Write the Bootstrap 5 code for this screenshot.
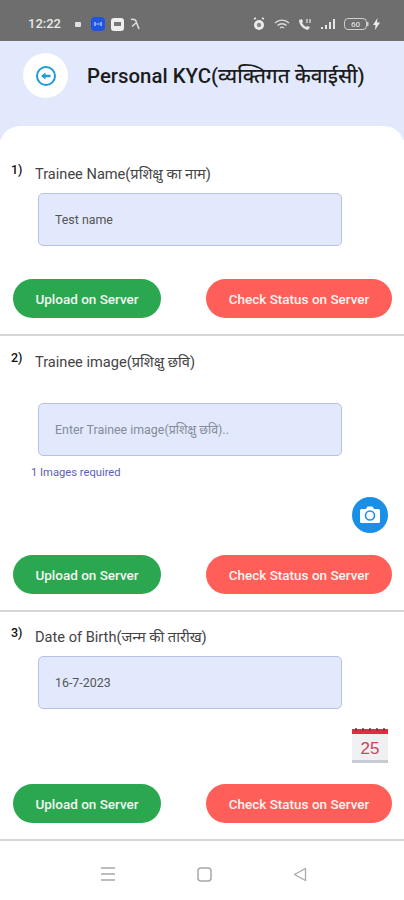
<!DOCTYPE html>
<html lang="hi">
<head>
  <meta charset="UTF-8">
  <meta name="viewport" content="width=device-width, initial-scale=1.0">
  <title>Personal KYC</title>
  <link href="https://cdn.jsdelivr.net/npm/bootstrap@5.3.0/dist/css/bootstrap.min.css" rel="stylesheet">
  <style>
    body { width: 404px; height: 900px; overflow: hidden; background: #fff; font-family: Roboto, "Noto Sans", "Noto Sans Devanagari", sans-serif; }
    .status-strip { height: 41px; background: #6e6e6e; color: #e8e8e8; font-size: 13px; font-weight: 500; padding: 7px 24px 0 28px; }
    .status-left { gap: 6px; }
    .ico-small { margin-left: 7px; }
    .ico-blue { margin-left: 3px; }
    .kyc-head { height: 99px; background: #e2e9fc; padding: 12px 0 0 23px; }
    .back-round { width: 45px; height: 45px; background: #fff; }
    .kyc-title { font-size: 20.4px; font-weight: 500; color: #1c1c1c; margin-left: 19px; white-space: nowrap; padding-top: 13px; }
    .sheet { margin-top: -14px; background: #fff; border-radius: 20px 20px 0 0; height: 714px; padding-top: 37px; }
    .step { height: 18px; font-size: 14.6px; color: #444; line-height: 18px; white-space: nowrap; }
    .step-two { margin-top: 15px; }
    .step-three { margin-top: 14px; }
    .step-label { padding-top: 2px; }
    .step-no { width: 35px; padding-left: 11px; font-weight: 500; color: #111; font-size: 12.5px; margin-top: -2px; }
    .fake-input { width: 304px; height: 53px; margin: 12px 0 0 38px; background: #e2e9fc; border: 1px solid #b9c2e6; border-radius: 5px; padding: 1px 16px 0; font-size: 12.4px; color: #555; }
    .fake-input.is-hint { color: #858b99; margin-top: 34px; }
    .img-note { font-size: 11.2px; color: #5c5cc0; margin: 10px 0 0 31px; line-height: 14px; }
    .tool-row { padding-right: 16px; margin-top: 17px; }
    .tool-cal { margin-top: 19px; }
    .cam-round { width: 36px; height: 36px; background: #1a8fe8; }
    .btn-row { padding: 0 12px 0 13px; margin-top: 33px; }
    .btn-row-two { margin-top: 22px; }
    .btn-row-three { margin-top: 21px; }
    .pill { height: 39px; border: 0; border-radius: 20px; color: #f4f4f4; font-size: 13.5px; font-weight: 500; padding: 1px 0 0; }
    .pill-up { width: 148px; background: #2ba84f; }
    .pill-up:hover { background: #2ba84f; color: #fff; }
    .pill-check { width: 186px; background: #ff5f58; }
    .pill-check:hover { background: #ff5f58; color: #fff; }
    .rule-line { height: 2px; background: #d6d6d6; margin: 16px 0 0; }
    .nav-strip { height: 58px; padding: 8px 0 0 4px; }
    .nav-slot { width: 96px; }
  </style>
</head>
<body>
  <div class="status-strip d-flex align-items-center justify-content-between">
    <div class="status-left d-flex align-items-center">
      <span>12:22</span>
      <svg width="8" height="8" viewBox="0 0 8 8" class="ico-small"><rect x="1" y="2" width="6" height="5" rx="1" fill="#e0e0e0"/></svg>
      <svg width="14" height="14" viewBox="0 0 14 14" class="ico-blue"><rect width="14" height="14" rx="4" fill="#1f55e0"/><path d="M4 5v4M10 5v4M5.500 7h3" stroke="#cfe0ff" stroke-width="1.200"/></svg>
      <svg width="13" height="13" viewBox="0 0 13 13"><rect width="13" height="13" rx="3" fill="#efefef"/><rect x="3" y="4" width="7" height="4" fill="#777"/></svg>
      <svg width="10" height="12" viewBox="0 0 10 12"><path d="M1 1.500C4 .500 6 2 6.500 4.500L9 11M6 5 2 8.500" stroke="#e0e0e0" stroke-width="1.500" fill="none"/></svg>
    </div>
    <div class="d-flex align-items-center gap-1">
      <svg width="14" height="14" viewBox="0 0 14 14"><circle cx="7" cy="8" r="5" fill="#ececec"/><circle cx="7" cy="8" r="2.200" fill="#8a8a8a"/><path d="M2 2 4 1M12 2 10 1" stroke="#ececec" stroke-width="1.400"/></svg>
      <svg width="16" height="13" viewBox="0 0 16 13" class="ms-1"><path d="M1 5a10 10 0 0 1 14 0M3.500 7.500a6.500 6.500 0 0 1 9 0M6 10a3 3 0 0 1 4 0" stroke="#dcdcdc" stroke-width="1.400" fill="none"/></svg>
      <svg width="14" height="13" viewBox="0 0 14 13" class="ms-1"><path d="M1 2c0 5 4 9 9 10l2-3-3-1-1 1C6.500 8 5 6.500 4 5l1-1-1-3z" fill="#e6e6e6"/><path d="M9 1v4M12 1v4" stroke="#e6e6e6" stroke-width="1.200"/></svg>
      <svg width="16" height="12" viewBox="0 0 16 12" class="ms-1"><path d="M1 9h2v2H1zM5 7h2v4H5zM9 4h2v7H9zM13 1h2v10h-2z" fill="#e6e6e6"/></svg>
      <svg width="25" height="12" viewBox="0 0 25 12" class="ms-1"><rect x=".5" y=".5" width="22" height="11" rx="3.500" fill="none" stroke="#cfcfcf"/><rect x="23" y="4" width="1.500" height="4" fill="#cfcfcf"/><text x="11.500" y="9" font-size="8" text-anchor="middle" fill="#dcdcdc" font-family="Roboto">60</text></svg>
      <svg width="7" height="12" viewBox="0 0 7 12"><path d="M4.500 0 0 7h2.500L2 12l5-7.500H4z" fill="#ececec"/></svg>
    </div>
  </div>

  <div class="kyc-head d-flex align-items-start">
    <div class="back-round rounded-circle d-flex align-items-center justify-content-center">
      <svg width="22" height="22" viewBox="0 0 22 22"><circle cx="11" cy="11" r="9" fill="none" stroke="#1f9bd8" stroke-width="2"/><path d="M6 11l4.500-3.500v2.300H15.500v2.400H10.500v2.300z" fill="#1f9bd8"/></svg>
    </div>
    <div class="kyc-title lh-1">Personal KYC(व्यक्तिगत केवाईसी)</div>
  </div>

  <div class="sheet">
    <section>
      <div class="d-flex step"><span class="step-no">1)</span><span class="step-label">Trainee Name(प्रशिक्षु का नाम)</span></div>
      <div class="fake-input d-flex align-items-center">Test name</div>
      <div class="btn-row d-flex justify-content-between">
        <button class="btn pill pill-up">Upload on Server</button>
        <button class="btn pill pill-check">Check Status on Server</button>
      </div>
      <div class="rule-line"></div>
    </section>
    <section>
      <div class="d-flex step step-two"><span class="step-no">2)</span><span class="step-label">Trainee image(प्रशिक्षु छवि)</span></div>
      <div class="fake-input is-hint d-flex align-items-center">Enter Trainee image(प्रशिक्षु छवि)..</div>
      <div class="img-note">1 Images required</div>
      <div class="tool-row d-flex justify-content-end">
        <div class="cam-round rounded-circle d-flex align-items-center justify-content-center">
          <svg width="22" height="20" viewBox="0 0 22 20"><path d="M2.500 4H7l1.500-2.500h5L15 4h4.500A1.500 1.500 0 0 1 21 5.500v11a1.500 1.500 0 0 1-1.500 1.500h-17A1.500 1.500 0 0 1 1 16.500v-11A1.500 1.500 0 0 1 2.500 4z" fill="#fff"/><circle cx="11" cy="10.500" r="4.500" fill="none" stroke="#1a8fe8" stroke-width="1.600"/></svg>
        </div>
      </div>
      <div class="btn-row btn-row-two d-flex justify-content-between">
        <button class="btn pill pill-up">Upload on Server</button>
        <button class="btn pill pill-check">Check Status on Server</button>
      </div>
      <div class="rule-line"></div>
    </section>
    <section>
      <div class="d-flex step step-three"><span class="step-no">3)</span><span class="step-label">Date of Birth(जन्म की तारीख)</span></div>
      <div class="fake-input d-flex align-items-center">16-7-2023</div>
      <div class="tool-row tool-cal d-flex justify-content-end">
        <svg width="36" height="35" viewBox="0 0 36 35">
          <rect y="1" width="36" height="34" fill="#eef0f2"/>
          <rect y="32" width="36" height="3" fill="#c5ccd3"/>
          <rect y="1" width="36" height="5" fill="#dd2e44"/>
          <path d="M4 0v3M11 0v3M18 0v3M25 0v3M32 0v3" stroke="#8a2a3a" stroke-width="1.500"/>
          <text x="18" y="26" font-size="17" text-anchor="middle" fill="#c8455a" font-family="Liberation Sans">25</text>
        </svg>
      </div>
      <div class="btn-row btn-row-three d-flex justify-content-between">
        <button class="btn pill pill-up">Upload on Server</button>
        <button class="btn pill pill-check">Check Status on Server</button>
      </div>
      <div class="rule-line"></div>
    </section>
    <div class="nav-strip d-flex align-items-center justify-content-center">
      <div class="nav-slot d-flex justify-content-center">
        <svg width="16" height="16" viewBox="0 0 16 16"><path d="M1 2h14M1 8h14M1 14h14" stroke="#a8a8a8" stroke-width="1.500"/></svg>
      </div>
      <div class="nav-slot d-flex justify-content-center">
        <svg width="15" height="15" viewBox="0 0 15 15"><rect x="1" y="1" width="13" height="13" rx="3" fill="none" stroke="#a8a8a8" stroke-width="1.500"/></svg>
      </div>
      <div class="nav-slot d-flex justify-content-center">
        <svg width="14" height="15" viewBox="0 0 14 15"><path d="M12.500 1.500v12L1.500 7.500z" fill="none" stroke="#a8a8a8" stroke-width="1.300" stroke-linejoin="round"/></svg>
      </div>
    </div>
  </div>
  <script src="https://cdn.jsdelivr.net/npm/bootstrap@5.3.0/dist/js/bootstrap.bundle.min.js"></script>
</body>
</html>
